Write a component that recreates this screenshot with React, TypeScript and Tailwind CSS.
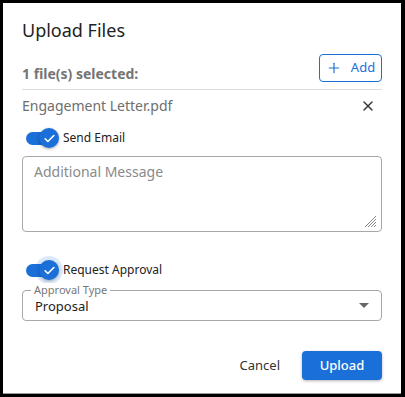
import { Plus, X } from "lucide-react";

const font = { fontFamily: '"Noto Sans", "Open Sans", sans-serif' };

function Toggle({ label, halo }: { label: string; halo?: boolean }) {
  return (
    <div className="flex items-center">
      <div className="relative h-[20px] w-[37px]">
        <div className="absolute left-[4px] top-[4px] h-[13px] w-[30px] rounded-full bg-[#1a6fd8]" />
        <div
          className={`absolute left-[17px] top-0 flex h-[20px] w-[20px] items-center justify-center rounded-full bg-[#1a6fd8] shadow-[0_1px_3px_rgba(0,0,0,0.35)] ${
            halo ? "ring-[4px] ring-[#1a6fd8]/15" : ""
          }`}
        >
          <svg width="13" height="13" viewBox="0 0 24 24" fill="none" stroke="white" strokeWidth="3" strokeLinecap="round" strokeLinejoin="round">
            <path d="M4 12.5l5 5L20 6.5" />
          </svg>
        </div>
      </div>
      <span className="ml-[4px] text-[12px] leading-[20px] text-[#222]">{label}</span>
    </div>
  );
}

export default function App() {
  return (
    <div className="h-[397px] w-[405px] bg-black pl-[3px] pt-[3px]" style={font}>
      <div className="flex h-[390px] w-[398px] flex-col bg-white px-[19px] pt-[15px] shadow-[0_1px_0_#9a9a9a]">
        <h1 className="text-[18px] leading-[24px] text-[#222]">Upload Files</h1>

        <div className="mt-[12px] flex items-end justify-between">
          <span className="mb-[-2px] text-[14px] font-bold leading-[20px] text-[#757575]">1 file(s) selected:</span>
          <button className="flex h-[28px] w-[63px] items-center justify-center gap-[9px] rounded-[4px] border border-[#1a6fd8] text-[13px] text-[#1a6fd8]">
            <Plus className="h-[16px] w-[16px]" strokeWidth={1.75} />
            Add
          </button>
        </div>

        <div className="mt-[7px] h-px bg-[#dcdcdc]" />

        <div className="mt-[6px] flex items-center justify-between pr-[6px]">
          <span className="text-[14px] leading-[20px] text-[#6e6e6e]">Engagement Letter.pdf</span>
          <X className="h-[16px] w-[16px] text-[#333]" strokeWidth={2} />
        </div>

        <div className="mt-[12px]">
          <Toggle label="Send Email" />
        </div>

        <div className="relative mt-[8px] h-[76px] rounded-[4px] border border-[#a8a8a8] px-[11px] pt-[2px]">
          <span className="text-[14px] leading-[20px] text-[#8a8a8a]">Additional Message</span>
          <svg className="absolute bottom-[3px] right-[4px]" width="14" height="14" viewBox="0 0 14 14" stroke="#888" strokeWidth="1">
            <path d="M2 13L13 2M5 13L13 5M8 13L13 8M11 13L13 11" />
          </svg>
        </div>

        <div className="mt-[28px]">
          <Toggle label="Request Approval" halo />
        </div>

        <div className="relative mt-[10px] flex h-[31px] items-center justify-between rounded-[4px] border border-[#a8a8a8] pl-[12px] pr-[12px]">
          <span className="absolute left-[8px] top-[-8px] bg-white px-[3px] text-[11px] leading-[14px] text-[#777]">Approval Type</span>
          <span className="pt-[3px] text-[13px] text-[#222]">Proposal</span>
          <svg width="10" height="5" viewBox="0 0 10 5">
            <path d="M0 0h10L5 5z" fill="#666" />
          </svg>
        </div>

        <div className="mt-[30px] flex items-center justify-end">
          <button className="mr-[22px] text-[13px] text-[#333]">Cancel</button>
          <button className="h-[29px] w-[80px] rounded-[4px] bg-[#1a6fd8] text-[13px] font-medium text-white shadow-[0_1px_3px_rgba(0,0,0,0.3)]">
            Upload
          </button>
        </div>
      </div>
    </div>
  );
}
